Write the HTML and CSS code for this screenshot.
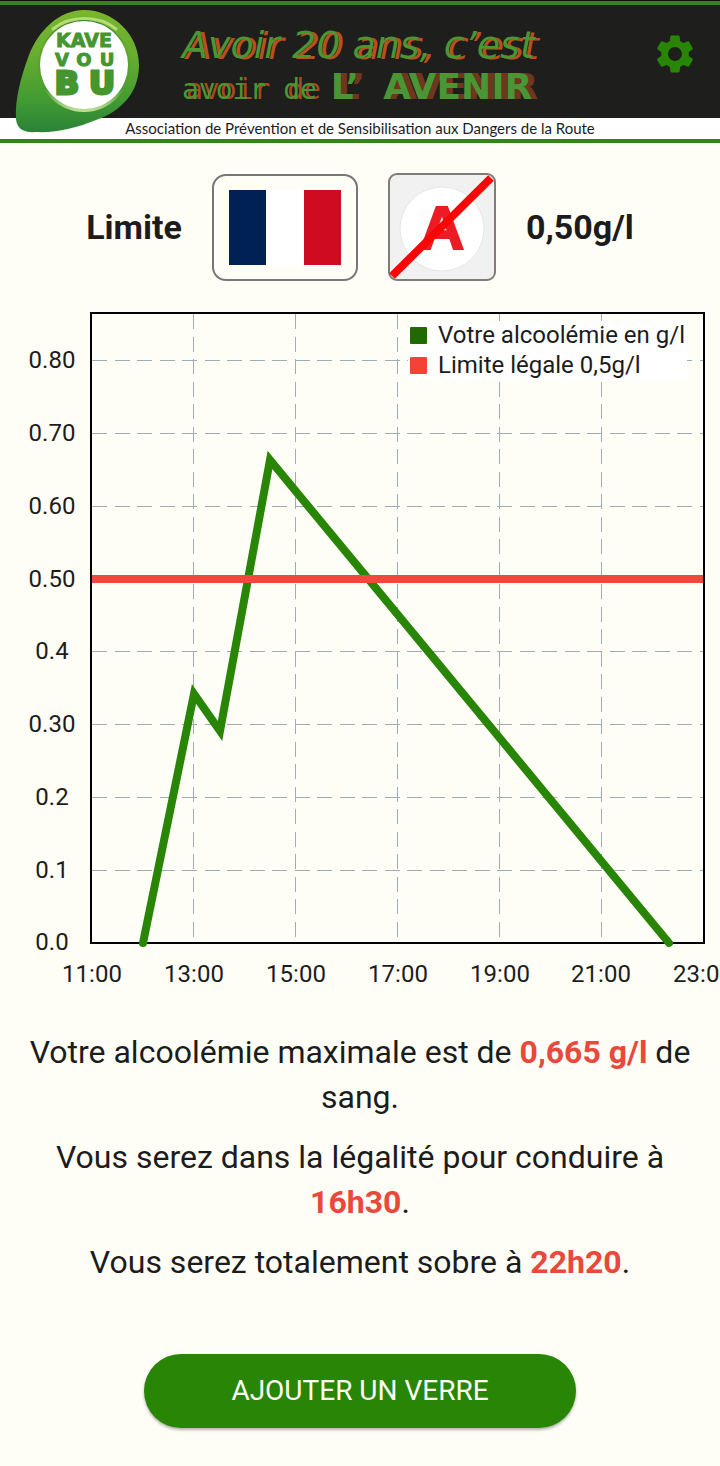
FILE: index.html
```html
<!DOCTYPE html>
<html lang="fr">
<head>
<meta charset="utf-8">
<meta name="viewport" content="width=device-width, initial-scale=1">
<title>Kavé Vou Bu</title>
<link rel="stylesheet" href="styles.css">
</head>
<body>
<header class="header">
  <div class="banner">
    <div class="slogan">
      <span class="slogan-script">Avoir 20 ans, c’est</span>
      <span class="slogan-line"><span class="slogan-mono">avoir de</span><span class="slogan-wide"><span>L’</span><span>AVENIR</span></span></span>
    </div>
    <button class="settings" type="button" aria-label="Paramètres">
      <svg viewBox="0 0 24 24" width="46" height="46" aria-hidden="true"><path fill="currentColor" d="M19.14 12.94c.04-.3.06-.61.06-.94 0-.32-.02-.64-.07-.94l2.03-1.58c.18-.14.23-.41.12-.61l-1.92-3.32c-.12-.22-.37-.29-.59-.22l-2.39.96c-.5-.38-1.03-.7-1.62-.94l-.36-2.54c-.04-.24-.24-.41-.48-.41h-3.84c-.24 0-.43.17-.47.41l-.36 2.54c-.59.24-1.13.57-1.62.94l-2.39-.96c-.22-.08-.47 0-.59.22L2.74 8.87c-.12.21-.08.47.12.61l2.03 1.58c-.05.3-.09.63-.09.94s.02.64.07.94l-2.03 1.58c-.18.14-.23.41-.12.61l1.92 3.32c.12.22.37.29.59.22l2.39-.96c.5.38 1.03.7 1.62.94l.36 2.54c.05.24.24.41.48.41h3.84c.24 0 .44-.17.47-.41l.36-2.54c.59-.24 1.13-.56 1.62-.94l2.39.96c.22.08.47 0 .59-.22l1.92-3.32c.12-.22.07-.47-.12-.61l-2.01-1.58zM12 15.6c-1.98 0-3.6-1.62-3.6-3.6s1.62-3.6 3.6-3.6 3.6 1.62 3.6 3.6-1.62 3.6-3.6 3.6z"/></svg>
    </button>
  </div>
  <p class="tagline">Association de Prévention et de Sensibilisation aux Dangers de la Route</p>
  <svg class="logo" viewBox="0 0 126 124" width="126" height="124" role="img" aria-label="Kave Vou Bu">
    <defs>
      <linearGradient id="leaf" x1="0" y1="0" x2="0" y2="1">
        <stop offset="0" stop-color="#7ab62d"/>
        <stop offset="0.35" stop-color="#68ae30"/>
        <stop offset="0.75" stop-color="#419a33"/>
        <stop offset="1" stop-color="#2a8237"/>
      </linearGradient>
      <linearGradient id="rim" x1="0" y1="0" x2="0" y2="1">
        <stop offset="0" stop-color="#368134"/>
        <stop offset="0.3" stop-color="#5fa52e"/>
        <stop offset="0.75" stop-color="#4f9c33"/>
        <stop offset="1" stop-color="#c4e19c"/>
      </linearGradient>
    </defs>
    <path fill="url(#leaf)" d="M69 0C98 0 124 24 124 55C124 82 107 101 81 110C62 118 40 123 22 122C8 123 2 119 1 109C0 90 5 69 14 45C23 22 43 0 69 0Z"/>
    <path fill="none" stroke="#b7dc75" stroke-width="3" stroke-linecap="round" d="M38 19C55 5 84 5 101 19"/>
    <circle cx="69" cy="56" r="46" fill="url(#rim)"/>
    <circle cx="69" cy="55" r="44" fill="#fff"/>
    <g class="logo-text">
      <text x="69" y="37" font-size="19">KAVE</text>
      <text x="47" y="56" font-size="18">V</text>
      <text x="69" y="56" font-size="18">O</text>
      <text x="92" y="56" font-size="18">U</text>
      <g class="logo-heavy">
        <text x="52" y="84" font-size="32">B</text>
        <text x="87" y="84" font-size="32">U</text>
      </g>
    </g>
  </svg>
</header>

<main>
  <section class="limit">
    <span>Limite</span>
    <button class="country" type="button" aria-label="France">
      <span class="flag"><i class="blue"></i><i class="white"></i><i class="red"></i></span>
    </button>
    <button class="novice" type="button" aria-label="Jeune conducteur : non">
      <svg viewBox="0 0 108 108" width="108" height="108" aria-hidden="true">
        <rect x="1" y="1" width="106" height="106" rx="8" fill="#f1f1f1" stroke="#807d79" stroke-width="2"/>
        <circle cx="54" cy="56" r="42" fill="#fff" stroke="#e6e6e6"/>
        <text class="novice-letter" x="54" y="76">A</text>
        <path d="M4 103L103 5" stroke="#f90505" stroke-width="8"/>
      </svg>
    </button>
    <span>0,50g/l</span>
  </section>

  <svg class="chart" viewBox="0 0 720 700" role="img" aria-label="Évolution de votre alcoolémie">
    <path class="grid" d="M92 60H703M92 133H703M92 206H703M92 279H703M92 351H703M92 424H703M92 497H703M92 570H703M193 14V642M295 14V642M397 14V642M499 14V642M601 14V642"/>
    <rect x="91" y="13" width="613" height="630" fill="none" stroke="#000" stroke-width="2"/>
    <rect x="408" y="21" width="279" height="60" fill="#fff"/>
    <rect x="410" y="27" width="17" height="17" rx="1" fill="#1f6b02"/>
    <rect x="410" y="57" width="17" height="17" rx="1" fill="#f44336"/>
    <g class="chart-text">
      <text x="438" y="43">Votre alcoolémie en g/l</text>
      <text x="438" y="73">Limite légale 0,5g/l</text>
    </g>
    <path class="curve" d="M143 643L194 394L220 431L270 160L669 643"/>
    <path d="M92 279H703" stroke="#ee493c" stroke-width="8"/>
    <g class="chart-text middle">
      <text x="52" y="68">0.80</text>
      <text x="52" y="141">0.70</text>
      <text x="52" y="214">0.60</text>
      <text x="52" y="287">0.50</text>
      <text x="52" y="359">0.4</text>
      <text x="52" y="432">0.30</text>
      <text x="52" y="505">0.2</text>
      <text x="52" y="578">0.1</text>
      <text x="52" y="650">0.0</text>
      <text x="92" y="682">11:00</text>
      <text x="194" y="682">13:00</text>
      <text x="296" y="682">15:00</text>
      <text x="398" y="682">17:00</text>
      <text x="500" y="682">19:00</text>
      <text x="601" y="682">21:00</text>
      <text x="703" y="682">23:00</text>
    </g>
  </svg>

  <section class="summary">
    <p>Votre alcoolémie maximale est de <strong>0,665 g/l</strong> de sang.</p>
    <p>Vous serez dans la légalité pour conduire à <strong>16h30</strong>.</p>
    <p>Vous serez totalement sobre à <strong>22h20</strong>.</p>
  </section>

  <button class="add" type="button">AJOUTER UN VERRE</button>
</main>
</body>
</html>
```
FILE: styles.css
```css
* {
  box-sizing: border-box;
}

body {
  margin: 0;
  background: #fefef6;
  color: #1c1c1c;
  font-family: Roboto, "Liberation Sans", sans-serif;
  overflow-x: hidden;
}

button {
  font: inherit;
  cursor: pointer;
}

.header {
  position: relative;
  border-top: 1px solid #111;
  border-bottom: 4px solid #35821f;
  background: #fff;
}

.banner {
  display: flex;
  align-items: center;
  justify-content: space-between;
  height: 117px;
  padding: 0 22px 16px 182px;
  border-top: 4px solid #35821f;
  background: #1e1e1c;
}

.slogan {
  display: flex;
  flex-direction: column;
  gap: 4px;
  padding-top: 26px;
  color: #4a9634;
  white-space: nowrap;
}

.slogan-script {
  font: italic 200 38px/40px "DejaVu Sans", sans-serif;
  text-shadow: 4px 1px 0 #b9501d;
}

.slogan-line {
  display: flex;
  align-items: baseline;
  gap: 14px;
}

.slogan-mono {
  font: 28px/36px "DejaVu Sans Mono", monospace;
  text-shadow: 4px 0 0 #a84a1e;
}

.slogan-wide {
  display: flex;
  gap: 24px;
  font: bold 36px/36px "DejaVu Sans", sans-serif;
  text-shadow: 6px 0 0 #6f371c;
}

.settings {
  display: flex;
  padding: 0;
  border: 0;
  background: none;
  color: #288505;
}

.tagline {
  margin: 0;
  font: 15px/21px Lato, sans-serif;
  text-align: center;
  white-space: nowrap;
}

.logo {
  position: absolute;
  left: 15px;
  top: 9px;
}

.logo-text {
  fill: #45962f;
  stroke: #45962f;
  stroke-width: 1px;
  font-family: "DejaVu Sans", sans-serif;
  font-weight: bold;
  text-anchor: middle;
}

.logo-heavy {
  stroke-width: 3px;
}

.limit {
  display: flex;
  align-items: center;
  justify-content: center;
  gap: 30px;
  padding-top: 30px;
  font-size: 34px;
  font-weight: 700;
}

.country {
  padding: 14px 15px;
  border: 2px solid #777;
  border-radius: 14px;
  background: none;
}

.flag {
  display: grid;
  grid-template-columns: 1fr 1fr 1fr;
  width: 112px;
  height: 75px;
}

.blue {
  background: #002153;
}

.white {
  background: #fff;
}

.red {
  background: #ce0b21;
}

.novice {
  display: flex;
  padding: 0;
  border: 0;
  background: none;
}

.novice-letter {
  fill: #ec1c25;
  stroke: #ec1c25;
  stroke-width: 2px;
  font: bold 62px "Liberation Sans", sans-serif;
  text-anchor: middle;
}

.chart {
  display: block;
  width: 100%;
  margin-top: 19px;
}

.grid {
  fill: none;
  stroke: #9dadb1;
  stroke-width: 1px;
  stroke-dasharray: 15 7.5;
  shape-rendering: crispEdges;
}

.curve {
  fill: none;
  stroke: #288505;
  stroke-width: 8px;
  stroke-linecap: round;
}

.chart-text {
  fill: #1c1c1c;
  font-size: 24px;
}

.middle {
  text-anchor: middle;
}

.summary {
  display: flex;
  flex-direction: column;
  gap: 15px;
  padding: 30px 20px 0;
  font-size: 32px;
  line-height: 45px;
  text-align: center;
}

.summary p {
  margin: 0;
}

.summary strong {
  color: #e9493c;
}

.add {
  display: block;
  width: 60%;
  margin: 69px auto 38px;
  padding: 18px 0;
  border: 0;
  border-radius: 37px;
  background: #288505;
  box-shadow: 0 2px 3px rgba(0, 0, 0, 0.3);
  color: #fefef6;
  font-size: 28px;
  line-height: 38px;
}
```
